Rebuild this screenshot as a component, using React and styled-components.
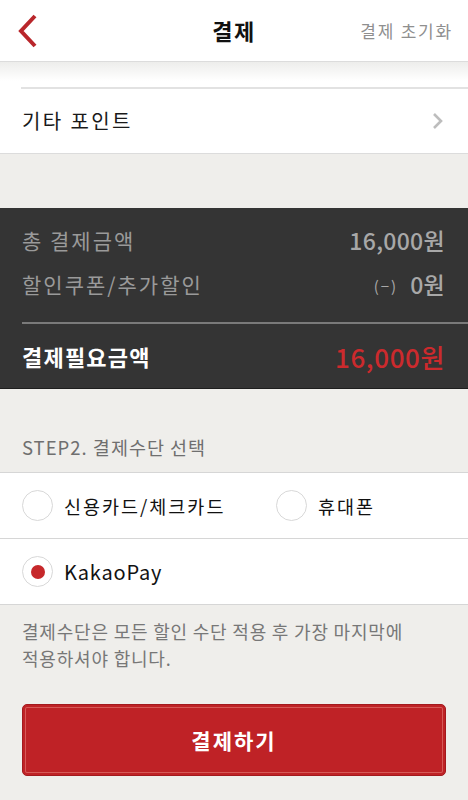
import styled, { createGlobalStyle } from 'styled-components';

const GlobalStyle = createGlobalStyle`
    html, body {
        margin: 0;
        padding: 0;
        background: #efeeeb;
    }
    body {
        font-family: "Noto Sans CJK KR", "Noto Sans", sans-serif;
        -webkit-font-smoothing: antialiased;
    }
`;

export default function App() {
    return (
        <Page>
            <GlobalStyle />
            <Header>
                <BackButton aria-label="뒤로">
                    <svg width="22" height="34" viewBox="0 0 22 34">
                        <polyline points="18,2 4,17 18,32" fill="none" stroke="#b9262b" strokeWidth="4" />
                    </svg>
                </BackButton>
                <Title>결제</Title>
                <ResetLink>결제 초기화</ResetLink>
            </Header>

            <ScrolledStrip />
            <ListRow>
                <RowLabel>기타 포인트</RowLabel>
                <svg width="12" height="18" viewBox="0 0 12 18">
                    <polyline points="2,2 9,9 2,16" fill="none" stroke="#bdbdbd" strokeWidth="2.6" />
                </svg>
            </ListRow>

            <Spacer />

            <SummaryPanel>
                <SummaryRow>
                    <span>총 결제금액</span>
                    <Amount>16,000원</Amount>
                </SummaryRow>
                <SummaryRow>
                    <span>할인쿠폰/추가할인</span>
                    <Amount>
                        <Minus>(−)</Minus>0원
                    </Amount>
                </SummaryRow>
                <Divider />
                <TotalRow>
                    <span>결제필요금액</span>
                    <TotalAmount>16,000원</TotalAmount>
                </TotalRow>
            </SummaryPanel>

            <SectionTitle>STEP2. 결제수단 선택</SectionTitle>

            <MethodRow>
                <Method $wide>
                    <Radio />
                    신용카드/체크카드
                </Method>
                <Method>
                    <Radio />
                    휴대폰
                </Method>
            </MethodRow>
            <MethodRow>
                <Method $latin>
                    <Radio $checked />
                    KakaoPay
                </Method>
            </MethodRow>

            <Notice>결제수단은 모든 할인 수단 적용 후 가장 마지막에 적용하셔야 합니다.</Notice>

            <PayButton>결제하기</PayButton>
        </Page>
    );
}

// Styled components

const Page = styled.div`
    width: 468px;
    min-height: 800px;
    background: #efeeeb;
    overflow: hidden;
`;

const Header = styled.header`
    height: 61px;
    background: #fff;
    border-bottom: 1px solid #dcdcdc;
    display: grid;
    grid-template-columns: 1fr auto 1fr;
    align-items: center;
    padding: 0 17px 0 17px;
`;

const BackButton = styled.button`
    justify-self: start;
    background: none;
    border: none;
    padding: 0;
    display: flex;
    align-items: center;
`;

const Title = styled.h1`
    margin: 0 0 2px 0;
    font-size: 22px;
    font-weight: 700;
    color: #111;
    letter-spacing: 1.5px;
`;

const ResetLink = styled.span`
    justify-self: end;
    font-size: 17px;
    color: #8f8f8f;
    letter-spacing: 1.8px;
    margin-right: -2px;
`;

const ScrolledStrip = styled.div`
    height: 25px;
    background: linear-gradient(#ededeb, #fff 75%);
    border-bottom: 2px solid #e2e2e2;
    border-image: linear-gradient(to right, #fff 22px, #e2e2e2 22px) 1;
`;

const ListRow = styled.div`
    height: 65px;
    box-sizing: border-box;
    background: #fff;
    border-bottom: 1px solid #dcdcdc;
    display: flex;
    align-items: center;
    justify-content: space-between;
    padding: 0 24px 0 22px;
`;

const RowLabel = styled.span`
    font-size: 20px;
    color: #1a1a1a;
    letter-spacing: 2.4px;
    margin-bottom: 2px;
`;

const Spacer = styled.div`
    height: 54px;
`;

const SummaryPanel = styled.section`
    background: #343434;
    padding: 10px 23px 0 22px;
    border-bottom: 1px solid #1e1e1e;
`;

const SummaryRow = styled.div`
    height: 44px;
    display: flex;
    align-items: center;
    justify-content: space-between;
    font-size: 21px;
    color: #9a9a9a;
    letter-spacing: 2px;
`;

const Amount = styled.span`
    font-weight: 500;
    font-size: 23px;
    color: #a8a8a8;
    letter-spacing: 0.3px;
`;

const Minus = styled.span`
    font-weight: 400;
    font-size: 15px;
    margin-right: 12px;
    position: relative;
    top: -2px;
    letter-spacing: 2px;
`;

const Divider = styled.div`
    height: 2px;
    background: #7a7a7a;
    margin: 16px -23px 0 0;
`;

const TotalRow = styled.div`
    height: 64px;
    display: flex;
    align-items: center;
    justify-content: space-between;
    font-size: 22px;
    font-weight: 700;
    color: #fff;
    letter-spacing: 1.2px;
`;

const TotalAmount = styled.span`
    color: #cc2a2d;
    font-weight: 500;
    font-size: 26px;
    letter-spacing: 0.6px;
`;

const SectionTitle = styled.h2`
    margin: 0;
    height: 84px;
    box-sizing: border-box;
    padding: 44px 22px 0;
    font-size: 18.5px;
    line-height: 28px;
    font-weight: 400;
    color: #6f6f6f;
    letter-spacing: 1px;
    border-bottom: 1px solid #d6d6d6;
`;

const MethodRow = styled.div`
    height: 66px;
    box-sizing: border-box;
    background: #fff;
    border-bottom: 1px solid #d6d6d6;
    display: flex;
    align-items: center;
    padding: 0 22px;
`;

const Method = styled.label`
    display: flex;
    align-items: center;
    gap: 11px;
    width: ${(p) => (p.$wide ? '254px' : 'auto')};
    font-size: ${(p) => (p.$latin ? '20px' : '18.5px')};
    letter-spacing: ${(p) => (p.$latin ? '0.8px' : '2px')};
    color: #111;
`;

const Radio = styled.span`
    width: 31px;
    height: 31px;
    flex-shrink: 0;
    box-sizing: border-box;
    border-radius: 50%;
    border: 1px solid #d8d8d8;
    background: #fff;
    display: flex;
    align-items: center;
    justify-content: center;

    &::after {
        content: '';
        display: ${(p) => (p.$checked ? 'block' : 'none')};
        width: 14px;
        height: 14px;
        border-radius: 50%;
        background: #c6282b;
    }
`;

const Notice = styled.p`
    margin: 0;
    padding: 13px 22px 0;
    font-size: 18px;
    line-height: 27px;
    color: #777;
    letter-spacing: 0.8px;
    word-break: keep-all;
`;

const PayButton = styled.button`
    display: block;
    width: 424px;
    height: 72px;
    margin: 32px 22px 0;
    background: #bf2226;
    border: 1px solid #a31a1e;
    border-radius: 5px;
    box-shadow: inset 0 0 0 2px #bf2226, inset 0 0 0 3px #d65a58;
    color: #fff;
    font-family: "Noto Sans CJK KR", sans-serif;
    font-size: 21px;
    font-weight: 700;
    letter-spacing: 2px;
`;
